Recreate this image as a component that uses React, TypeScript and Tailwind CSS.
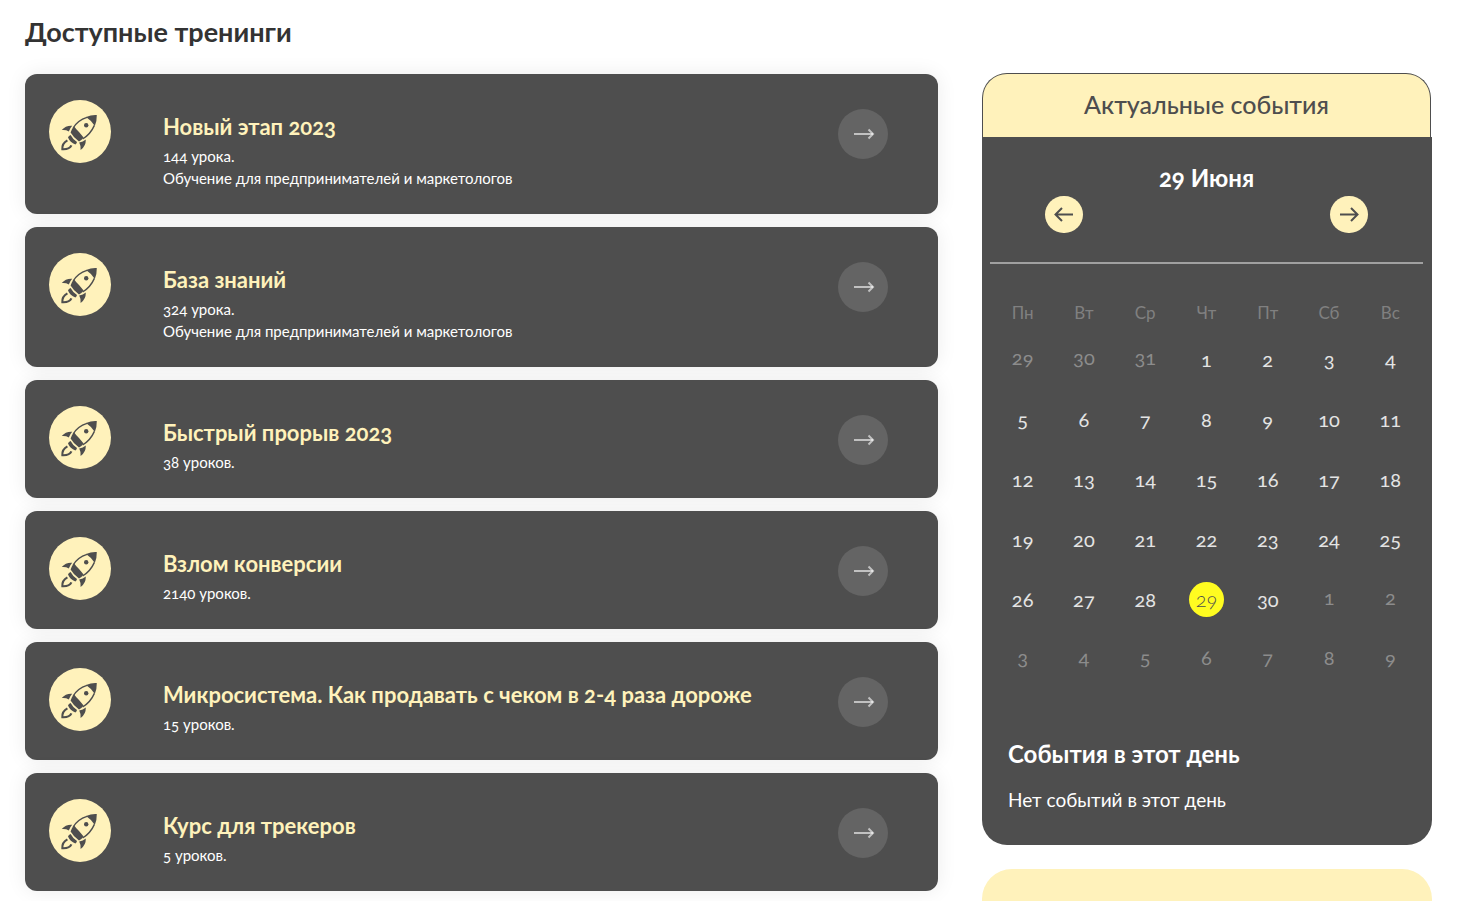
interface Training {
  title: string
  lessons: string
  description?: string
}

interface Day {
  day: number
  muted?: boolean
}

const TRAININGS: Training[] = [
  { title: 'Новый этап 2023', lessons: '144 урока.', description: 'Обучение для предпринимателей и маркетологов' },
  { title: 'База знаний', lessons: '324 урока.', description: 'Обучение для предпринимателей и маркетологов' },
  { title: 'Быстрый прорыв 2023', lessons: '38 уроков.' },
  { title: 'Взлом конверсии', lessons: '2140 уроков.' },
  { title: 'Микросистема. Как продавать с чеком в 2-4 раза дороже', lessons: '15 уроков.' },
  { title: 'Курс для трекеров', lessons: '5 уроков.' },
]

const WEEKDAYS = ['Пн', 'Вт', 'Ср', 'Чт', 'Пт', 'Сб', 'Вс']
const SELECTED_DAY = 29

// 29 May - 9 July, six full weeks
const DAYS: Day[] = [
  ...[29, 30, 31].map((day) => ({ day, muted: true })),
  ...Array.from({ length: 30 }, (_, i) => ({ day: i + 1 })),
  ...Array.from({ length: 9 }, (_, i) => ({ day: i + 1, muted: true })),
]
const WEEKS = Array.from({ length: 6 }, (_, i) => DAYS.slice(i * 7, i * 7 + 7))

/* ─── Icons ─────────────────────────────────────────────────────────────── */

function Rocket() {
  return (
    <svg viewBox="0 0 62 63" className="h-[63px] w-[62px] shrink-0" aria-hidden>
      <ellipse cx="31" cy="31.5" rx="31" ry="31.5" fill="#fff2bb" />
      <g fill="#4e4e4e">
        <path d="M37 17Q42.5 14.6 47.8 15Q48 20.5 45.8 26Q42.5 20.5 37 17Z" />
        <path d="M21.6 32.4Q22.8 28.6 25 26.2Q27.2 29.4 30 32L34.6 37.4Q33 39.8 30 41.4Q24.6 37.6 21.6 32.4Z" />
        <path d="M12.8 30Q16.6 25.4 23.2 25.8Q21 28.2 19.8 31.4Q17 29.6 12.8 30Z" />
        <path d="M36.8 39.4Q37 46 31.6 50Q32 45.8 30.2 42.6Q34 41.8 36.8 39.4Z" />
        <path d="M19 37.4Q19.6 35.6 21.6 35Q24 39.6 28 42Q27.6 43.6 26.4 44.4Q21 42.2 19 37.4Z" />
        <circle cx="37.2" cy="25.2" r="2.2" />
      </g>
      <g fill="none" stroke="#4e4e4e">
        <path d="M38 17.4Q28.5 20.4 24.2 28M45.4 25.4Q41.4 34.4 33.6 39" strokeWidth="1.4" />
        <path d="M18.4 40.4Q12.8 43.6 13.4 49.2Q20.4 49.6 22.4 45.4" strokeWidth="2.2" />
      </g>
    </svg>
  )
}

function OpenArrow() {
  return (
    <svg viewBox="0 0 50 50" className="h-[50px] w-[50px]" fill="none" stroke="#fff" aria-hidden>
      <path d="M16 25H35" strokeWidth="2" strokeOpacity="0.6" />
      <path d="M30.5 20.5L35 25L30.5 29.5" strokeWidth="2" strokeOpacity="0.6" />
    </svg>
  )
}

function NavButton({ label, back }: { label: string; back?: boolean }) {
  return (
    <button
      type="button"
      aria-label={label}
      className="flex h-[37px] w-[38px] cursor-pointer items-center justify-center rounded-full bg-[#fff2bb]"
    >
      <svg viewBox="0 0 20 16" className="h-4 w-5" fill="none" stroke="#4e4e4e" strokeWidth="2" aria-hidden>
        <path d={back ? 'M19 7.5H1M8 1L1.5 7.5L8 14' : 'M1 7.5H19M12 1L18.5 7.5L12 14'} />
      </svg>
    </button>
  )
}

/* ─── Trainings ─────────────────────────────────────────────────────────── */

function TrainingCard({ title, lessons, description }: Training) {
  return (
    <li>
      <a
        href="#"
        className="flex items-start rounded-xl bg-[#4e4e4e] pr-[50px] pb-[25px] pl-6 text-white shadow-[0_0_20px_rgba(0,0,0,0.08)]"
      >
        <div className="pt-[26px]">
          <Rocket />
        </div>
        <div className="min-w-0 flex-1 pt-[38px] pl-[52px]">
          <h3 className="text-[22px] leading-[30px] font-bold text-[#fff2bb]">{title}</h3>
          <p className="mt-[3px] text-[15px] leading-[22px]">{lessons}</p>
          {description && <p className="text-[15px] leading-[22px]">{description}</p>}
        </div>
        <div className="mt-[35px] -mb-6 shrink-0 rounded-full bg-[#646464]">
          <OpenArrow />
        </div>
      </a>
    </li>
  )
}

/* ─── Calendar ──────────────────────────────────────────────────────────── */

function DayCell({ day, muted }: Day) {
  const selected = !muted && day === SELECTED_DAY
  return (
    <td className={muted ? 'h-[60px] p-0 pb-1' : 'h-[60px] p-0'}>
      <button
        type="button"
        aria-pressed={selected}
        className={
          selected
            ? 'h-[35px] w-[35px] rounded-full bg-[#fffc20] font-light text-[#4e4e4e]'
            : muted
              ? 'h-[35px] w-[35px] rounded-full text-[#8c8c8c]'
              : 'h-[35px] w-[35px] rounded-full text-[#e4e4e4]'
        }
      >
        {day}
      </button>
    </td>
  )
}

function Calendar() {
  return (
    <section aria-label="Актуальные события">
      <h2 className="mr-px rounded-t-[25px] border border-b-0 border-[#4e4e4e] bg-[#fff2bb] pt-[15px] pb-[17px] text-center text-[25px] leading-[31px] font-medium text-[#4e4e4e]">
        Актуальные события
      </h2>
      <div className="rounded-b-[25px] bg-[#4e4e4e] pt-[26px] pr-[9px] pb-[30px] pl-2 text-white">
        <p className="text-center text-[24px] leading-[30px] font-bold">29 Июня</p>
        <div className="mt-[3px] flex justify-between px-[55px]">
          <NavButton label="Предыдущий месяц" back />
          <NavButton label="Следующий месяц" />
        </div>
        <hr className="mt-[29px] border-t-2 border-[#a0a0a0]" />

        <div className="mt-[33px] px-0.5">
          <table className="w-full table-fixed border-collapse text-center text-[20px] leading-6">
            <thead>
              <tr>
                {WEEKDAYS.map((name) => (
                  <th key={name} scope="col" className="h-8 p-0 text-[17px] leading-5 font-normal text-[#808080]">
                    {name}
                  </th>
                ))}
              </tr>
            </thead>
            <tbody>
              {WEEKS.map((week, i) => (
                <tr key={i}>
                  {week.map((d) => (
                    <DayCell key={d.day} {...d} />
                  ))}
                </tr>
              ))}
            </tbody>
          </table>
        </div>

        <div className="px-[18px] pt-[50px]">
          <h3 className="text-[24px] leading-[30px] font-bold">События в этот день</h3>
          <p className="mt-4 text-[19px] leading-[30px]">Нет событий в этот день</p>
        </div>
      </div>
    </section>
  )
}

export default function App() {
  return (
    <div className="overflow-hidden bg-white pr-8 pl-[25px] font-['Lato','Noto_Sans',sans-serif] oldstyle-nums">
      <h1 className="pt-4 text-[27px] leading-8 font-bold text-[#333]">Доступные тренинги</h1>
      <main className="mt-[25px] grid grid-cols-[minmax(0,1fr)_450px] items-start gap-11">
        <ul className="flex flex-col gap-[13px] pt-px">
          {TRAININGS.map((training) => (
            <TrainingCard key={training.title} {...training} />
          ))}
        </ul>
        <aside className="flex flex-col gap-6">
          <Calendar />
          <div className="h-8 rounded-t-[30px] bg-[#fff2bb]" />
        </aside>
      </main>
    </div>
  )
}
